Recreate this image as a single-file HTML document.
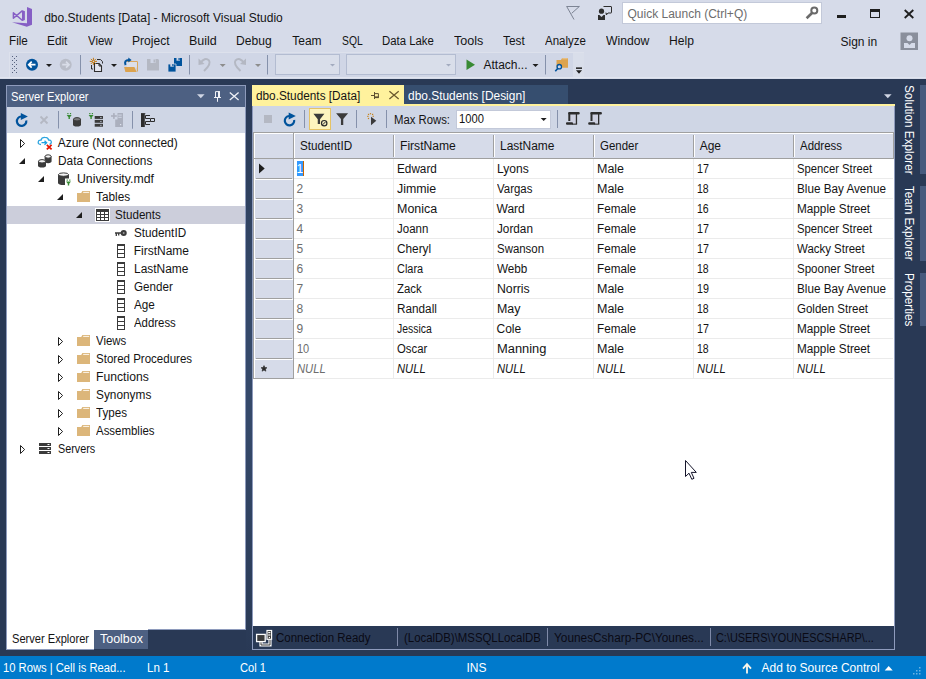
<!DOCTYPE html>
<html><head><meta charset="utf-8"><title>dbo.Students [Data] - Microsoft Visual Studio</title>
<style>
html,body{margin:0;padding:0;}
body{width:926px;height:679px;overflow:hidden;position:relative;background:#293955;font-family:"Liberation Sans", sans-serif;}
div,span,svg{position:absolute;box-sizing:border-box;}
span{white-space:pre;}
</style></head><body>
<div style="left:0px;top:0px;width:926px;height:79px;background:#d6dbe9;"></div>
<div style="left:9px;top:52px;width:575px;height:25px;background:#d0d6e6;border-left:1px solid #dde1ec;border-top:1px solid #dde1ec;"></div>
<div style="left:573px;top:53px;width:11px;height:24px;background:#d9deea;"></div>
<div style="left:0px;top:77px;width:926px;height:1px;background:#e1e5ef;"></div>
<div style="left:622px;top:2px;width:200px;height:22px;background:#ffffff;border:1px solid #c3c9d9;"></div>
<div style="left:6px;top:85px;width:240px;height:565px;background:#8e9bbc;"></div>
<div style="left:7px;top:86px;width:238px;height:21px;background:#4d6082;"></div>
<div style="left:7px;top:107px;width:238px;height:26px;background:#cfd6e5;"></div>
<div style="left:7px;top:133px;width:238px;height:497px;background:#ffffff;"></div>
<div style="left:7px;top:630px;width:87px;height:19px;background:#ffffff;"></div>
<div style="left:94px;top:630px;width:152px;height:20px;background:#293955;"></div>
<div style="left:94px;top:630px;width:54px;height:19px;background:#4d6082;"></div>
<div style="left:148px;top:629px;width:98px;height:1px;background:#8e9bbc;"></div>
<div style="left:7px;top:206px;width:238px;height:18px;background:#ccceDB;"></div>
<div style="left:246px;top:79px;width:6px;height:577px;background:linear-gradient(to bottom,#293955 0%,#35496a 40%,#35496a 60%,#293955 100%);"></div>
<div style="left:252px;top:85px;width:152px;height:21px;background:#fff29d;"></div>
<div style="left:404px;top:85px;width:164px;height:19px;background:#364e6f;"></div>
<div style="left:252px;top:104px;width:643px;height:2px;background:#fff29d;"></div>
<div style="left:252px;top:106px;width:643px;height:26px;background:#cfd6e5;border-left:1px solid #8e9bbc;border-right:1px solid #8e9bbc;"></div>
<div style="left:252px;top:132px;width:643px;height:494px;background:#ffffff;border-left:1px solid #8e9bbc;border-right:1px solid #8e9bbc;"></div>
<div style="left:252px;top:626px;width:643px;height:24px;background:#293955;border:1px solid #8e9bbc;border-top:none;"></div>
<div style="left:456px;top:110px;width:95px;height:19px;background:#ffffff;border:1px solid #c3c9d9;"></div>
<div style="left:397px;top:628px;width:1px;height:18px;background:#7f8aa8;"></div>
<div style="left:547px;top:628px;width:1px;height:18px;background:#7f8aa8;"></div>
<div style="left:710px;top:628px;width:1px;height:18px;background:#7f8aa8;"></div>
<div style="left:253px;top:132px;width:641px;height:1px;background:#a0a0a0;"></div>
<div style="left:253px;top:133px;width:641px;height:25px;background:#d6dbe9;"></div>
<div style="left:253px;top:133px;width:641px;height:1px;background:#ffffff;"></div>
<div style="left:253px;top:132px;width:1px;height:247px;background:#a0a0a0;"></div>
<div style="left:254px;top:133px;width:1px;height:245px;background:#ffffff;"></div>
<div style="left:255px;top:159px;width:38px;height:219px;background:#d6dbe9;"></div>
<div style="left:293px;top:133px;width:1px;height:246px;background:#a0a0a0;"></div>
<div style="left:294px;top:133px;width:1px;height:25px;background:#ffffff;"></div>
<div style="left:256px;top:178px;width:36px;height:1px;background:#a0a0a0;"></div>
<div style="left:255px;top:179px;width:38px;height:1px;background:#ffffff;"></div>
<div style="left:294px;top:178px;width:599px;height:1px;background:#ebebeb;"></div>
<div style="left:256px;top:198px;width:36px;height:1px;background:#a0a0a0;"></div>
<div style="left:255px;top:199px;width:38px;height:1px;background:#ffffff;"></div>
<div style="left:294px;top:198px;width:599px;height:1px;background:#ebebeb;"></div>
<div style="left:256px;top:218px;width:36px;height:1px;background:#a0a0a0;"></div>
<div style="left:255px;top:219px;width:38px;height:1px;background:#ffffff;"></div>
<div style="left:294px;top:218px;width:599px;height:1px;background:#ebebeb;"></div>
<div style="left:256px;top:238px;width:36px;height:1px;background:#a0a0a0;"></div>
<div style="left:255px;top:239px;width:38px;height:1px;background:#ffffff;"></div>
<div style="left:294px;top:238px;width:599px;height:1px;background:#ebebeb;"></div>
<div style="left:256px;top:258px;width:36px;height:1px;background:#a0a0a0;"></div>
<div style="left:255px;top:259px;width:38px;height:1px;background:#ffffff;"></div>
<div style="left:294px;top:258px;width:599px;height:1px;background:#ebebeb;"></div>
<div style="left:256px;top:278px;width:36px;height:1px;background:#a0a0a0;"></div>
<div style="left:255px;top:279px;width:38px;height:1px;background:#ffffff;"></div>
<div style="left:294px;top:278px;width:599px;height:1px;background:#ebebeb;"></div>
<div style="left:256px;top:298px;width:36px;height:1px;background:#a0a0a0;"></div>
<div style="left:255px;top:299px;width:38px;height:1px;background:#ffffff;"></div>
<div style="left:294px;top:298px;width:599px;height:1px;background:#ebebeb;"></div>
<div style="left:256px;top:318px;width:36px;height:1px;background:#a0a0a0;"></div>
<div style="left:255px;top:319px;width:38px;height:1px;background:#ffffff;"></div>
<div style="left:294px;top:318px;width:599px;height:1px;background:#ebebeb;"></div>
<div style="left:256px;top:338px;width:36px;height:1px;background:#a0a0a0;"></div>
<div style="left:255px;top:339px;width:38px;height:1px;background:#ffffff;"></div>
<div style="left:294px;top:338px;width:599px;height:1px;background:#ebebeb;"></div>
<div style="left:256px;top:358px;width:36px;height:1px;background:#a0a0a0;"></div>
<div style="left:255px;top:359px;width:38px;height:1px;background:#ffffff;"></div>
<div style="left:294px;top:358px;width:599px;height:1px;background:#ebebeb;"></div>
<div style="left:253px;top:378px;width:40px;height:1px;background:#a0a0a0;"></div>
<div style="left:294px;top:378px;width:599px;height:1px;background:#ebebeb;"></div>
<div style="left:393px;top:159px;width:1px;height:220px;background:#ebebeb;"></div>
<div style="left:393px;top:135px;width:1px;height:22px;background:#a0a0a0;"></div>
<div style="left:394px;top:135px;width:1px;height:22px;background:#ffffff;"></div>
<div style="left:493px;top:159px;width:1px;height:220px;background:#ebebeb;"></div>
<div style="left:493px;top:135px;width:1px;height:22px;background:#a0a0a0;"></div>
<div style="left:494px;top:135px;width:1px;height:22px;background:#ffffff;"></div>
<div style="left:593px;top:159px;width:1px;height:220px;background:#ebebeb;"></div>
<div style="left:593px;top:135px;width:1px;height:22px;background:#a0a0a0;"></div>
<div style="left:594px;top:135px;width:1px;height:22px;background:#ffffff;"></div>
<div style="left:693px;top:159px;width:1px;height:220px;background:#ebebeb;"></div>
<div style="left:693px;top:135px;width:1px;height:22px;background:#a0a0a0;"></div>
<div style="left:694px;top:135px;width:1px;height:22px;background:#ffffff;"></div>
<div style="left:793px;top:159px;width:1px;height:220px;background:#ebebeb;"></div>
<div style="left:793px;top:135px;width:1px;height:22px;background:#a0a0a0;"></div>
<div style="left:794px;top:135px;width:1px;height:22px;background:#ffffff;"></div>
<div style="left:893px;top:133px;width:1px;height:26px;background:#a0a0a0;"></div>
<div style="left:253px;top:158px;width:641px;height:1px;background:#a0a0a0;"></div>
<div style="left:297px;top:161px;width:6px;height:15px;background:#3399ff;"></div>
<div style="left:303px;top:161px;width:1px;height:15px;background:#c86400;"></div>
<div style="left:920px;top:85px;width:6px;height:89px;background:#465a7d;"></div>
<div style="left:920px;top:186px;width:6px;height:75px;background:#465a7d;"></div>
<div style="left:920px;top:273px;width:6px;height:53px;background:#465a7d;"></div>
<div style="left:0px;top:656px;width:926px;height:23px;background:#007acc;"></div>
<svg style="left:0;top:0" width="926" height="679" viewBox="0 0 926 679"><polygon points="27,7 32,9 32,24.7 26.8,26.8 12,22.3 27,23.3" fill="#865fc5"/><path d="M13.4 12.7 L13.4 18.3 L22.2 10.9 L24 11.7 L24 19.5 L22.2 20.3 Z" fill="none" stroke="#865fc5" stroke-width="1.5" stroke-linejoin="round"/><rect x="22" y="11" width="2.6" height="9" fill="#865fc5"/><path d="M566.5 6.5 H579.5 M566.7 6.5 L574 19.5 M579.3 6.5 L571.7 13.3" stroke="#7d8494" stroke-width="1" fill="none"/><circle cx="601.5" cy="11.2" r="2.6" fill="#2d2d2d"/><path d="M598 15 H599.5 L601.5 17 L603.5 15 H605 V20 H598 Z" fill="#2d2d2d"/><path d="M603.5 6.5 H611 Q611.5 6.5 611.5 7 V12.5 Q611.5 13 611 13 H608 L606.3 15 V13 H605.5" fill="none" stroke="#2d2d2d" stroke-width="1"/><circle cx="814.3" cy="10.6" r="3" fill="none" stroke="#6a6a6a" stroke-width="2"/><path d="M812 13 L806.6 18.2" stroke="#6a6a6a" stroke-width="2.6"/><rect x="837" y="15" width="9" height="3" fill="#1e1e1e"/><rect x="870.5" y="10.5" width="9" height="7" fill="none" stroke="#1e1e1e" stroke-width="1"/><rect x="870" y="9" width="10" height="3" fill="#1e1e1e"/><path d="M904.7 10 L913.3 18 M913.3 10 L904.7 18" stroke="#1e1e1e" stroke-width="1.8"/><rect x="900.5" y="32.5" width="17.5" height="17.5" fill="#8a8f9c"/><circle cx="909.5" cy="38.3" r="3" fill="#d6dbe9"/><path d="M904 43 H907.5 L909.5 45 L911.5 43 H915 V48 H904 Z" fill="#d6dbe9"/><rect x="12" y="56" width="1" height="1" fill="#55617e"/><rect x="16" y="56" width="1" height="1" fill="#55617e"/><rect x="14" y="58" width="1" height="1" fill="#55617e"/><rect x="12" y="60" width="1" height="1" fill="#55617e"/><rect x="16" y="60" width="1" height="1" fill="#55617e"/><rect x="14" y="62" width="1" height="1" fill="#55617e"/><rect x="12" y="64" width="1" height="1" fill="#55617e"/><rect x="16" y="64" width="1" height="1" fill="#55617e"/><rect x="14" y="66" width="1" height="1" fill="#55617e"/><rect x="12" y="68" width="1" height="1" fill="#55617e"/><rect x="16" y="68" width="1" height="1" fill="#55617e"/><rect x="14" y="70" width="1" height="1" fill="#55617e"/><rect x="12" y="72" width="1" height="1" fill="#55617e"/><rect x="16" y="72" width="1" height="1" fill="#55617e"/><circle cx="32" cy="64.7" r="6" fill="#00539c"/><path d="M35.5 64.7 H29 M31.7 61.7 L28.7 64.7 L31.7 67.7" stroke="#fff" stroke-width="1.7" fill="none"/><polygon points="46,64 52,64 49.0,67.0" fill="#1e1e1e"/><circle cx="65.7" cy="64.7" r="6" fill="#b9bdc8"/><path d="M62.2 64.7 H68.7 M66 61.7 L69 64.7 L66 67.7" stroke="#d9dde8" stroke-width="1.7" fill="none"/><rect x="80" y="55" width="1" height="19.5" fill="#8591ab"/><path d="M97 59.5 H100.5 L102.5 61.7 V63.5 M91.5 65 V69 H93" fill="none" stroke="#2d2d2d" stroke-width="1"/><path d="M94.5 63.5 H99 L101.5 66 V71.5 H94.5 Z" fill="#e4e6f0" stroke="#2d2d2d" stroke-width="1.1"/><path d="M99 63.5 V66 H101.5" fill="none" stroke="#2d2d2d" stroke-width="1"/><path d="M93.4 57.8 V65 M89.8 61.4 H97 M90.9 58.9 L95.9 63.9 M95.9 58.9 L90.9 63.9" stroke="#c27d1a" stroke-width="1"/><circle cx="93.4" cy="61.4" r="1.1" fill="#d0d6e6" stroke="#c27d1a" stroke-width="0.9"/><polygon points="111,64 117,64 114.0,67.0" fill="#1e1e1e"/><path d="M127 61.6 H137.4 V71.5" fill="none" stroke="#dca34e" stroke-width="1"/><rect x="127" y="62" width="10" height="5.5" fill="#dcdfe9"/><path d="M124.1 67 H134.4 L136.7 72 H125.4 Z" fill="#dca34e"/><path d="M125.6 65 Q123.6 60.2 129 60.1" fill="none" stroke="#00539c" stroke-width="2"/><polygon points="128.3,57.6 131.6,60.1 128.3,62.6" fill="#00539c"/><path d="M147 59 H158 L159 60 V70.5 H147 Z" fill="#b4b8c3"/><rect x="150.5" y="59" width="5" height="4" fill="#d0d6e6"/><rect x="153.5" y="59.5" width="1.5" height="3" fill="#b4b8c3"/><path d="M174 58 H182 V66 H174 Z" fill="#00539c"/><rect x="176.5" y="58" width="3.5" height="2.7" fill="#d0d6e6"/><rect x="178.5" y="58" width="1.2" height="2.2" fill="#00539c"/><path d="M168 64 H176 V72 H168 Z" fill="#00539c" stroke="#d0d6e6" stroke-width="0.8"/><rect x="170.3" y="64" width="3.5" height="2.7" fill="#d0d6e6"/><rect x="172.3" y="64" width="1.2" height="2.2" fill="#00539c"/><rect x="189" y="55" width="1" height="19.5" fill="#8591ab"/><path d="M200 63.5 Q205 56.5 209 60.5 Q211.5 64 204 71" fill="none" stroke="#b4b8c3" stroke-width="2"/><polygon points="198.5,58.5 198.5,65 204.5,64" fill="#b4b8c3"/><polygon points="219.7,64 225.7,64 222.7,67.0" fill="#8d8d8d"/><path d="M244.5 63.5 Q239.5 56.5 235.5 60.5 Q233 64 240.5 71" fill="none" stroke="#b4b8c3" stroke-width="2"/><polygon points="246,58.5 246,65 240,64" fill="#b4b8c3"/><polygon points="255,64 261,64 258.0,67.0" fill="#8d8d8d"/><rect x="267" y="55" width="1" height="19.5" fill="#8591ab"/><rect x="275.5" y="54.5" width="64" height="20" fill="#d9deea" stroke="#b3bcd1"/><rect x="346.5" y="54.5" width="109" height="20" fill="#d9deea" stroke="#b3bcd1"/><polygon points="330,64 335,64 332.5,66.5" fill="#a3abbf"/><polygon points="446,64 451,64 448.5,66.5" fill="#a3abbf"/><polygon points="466.5,59.5 475,64.7 466.5,70" fill="#388a34"/><polygon points="532.5,64 538.5,64 535.5,67.0" fill="#1e1e1e"/><rect x="545" y="55" width="1" height="19.5" fill="#8591ab"/><path d="M556.5 60 H561 L562 58.2 H568 V67.7 H556.5 Z" fill="#dca34e"/><path d="M562.3 58.8 H567.6" stroke="#ecc58a" stroke-width="1"/><circle cx="559.3" cy="66.7" r="2.2" fill="#d0d6e6" stroke="#00539c" stroke-width="1.3"/><path d="M557.7 68.5 L555.3 71.3" stroke="#00539c" stroke-width="1.6"/><rect x="576" y="67.4" width="6" height="1.5" fill="#1e1e1e"/><polygon points="576,70.3 582,70.3 579,73.7" fill="#1e1e1e"/><polygon points="197,94.3 204.6,94.3 200.8,98.2" fill="#d0d6e4"/><path d="M215.5 97 V91.6 H219.5 M214 97.5 H221 M217.5 98 V101.8" stroke="#f0f2f7" stroke-width="1" fill="none"/><rect x="218" y="91.1" width="2" height="6" fill="#f0f2f7"/><path d="M229.8 92.4 L238.6 100 M238.6 92.4 L229.8 100" stroke="#f0f2f7" stroke-width="1.3"/><path d="M21.3 116.5 A4.7 4.7 0 1 0 26.25 120.5" fill="none" stroke="#00539c" stroke-width="2.2"/><polygon points="20.8,112.9 27.900000000000002,116.5 20.8,120.10000000000001" fill="#00539c"/><path d="M40.5 116.5 L47.5 123.5 M47.5 116.5 L40.5 123.5" stroke="#b4b8c3" stroke-width="1.8"/><rect x="58" y="111" width="1" height="17.5" fill="#8591ab"/><path d="M66.7 115 H71.7 L69.9 117.3 V119 H68.5 V117.3 Z" fill="#388a34"/><rect x="67.3" y="113" width="1.2" height="1.2" fill="#388a34"/><rect x="69.9" y="113" width="1.2" height="1.2" fill="#388a34"/><path d="M73 119.1 V124.5 A4.0 2.1 0 0 0 81 124.5 V119.1 Z" fill="#3b3b3b"/><ellipse cx="77.0" cy="119.3" rx="3.5" ry="1.7000000000000002" fill="#7a7a7a" stroke="#3b3b3b" stroke-width="1"/><path d="M88.6 115 H93.6 L91.8 117.3 V119 H90.39999999999999 V117.3 Z" fill="#388a34"/><rect x="89.19999999999999" y="113" width="1.2" height="1.2" fill="#388a34"/><rect x="91.8" y="113" width="1.2" height="1.2" fill="#388a34"/><rect x="94.7" y="116.0" width="8.3" height="2.9" fill="#3b3b3b"/><rect x="100.3" y="117.0" width="1.2" height="1" fill="#cfd6e5"/><rect x="94.7" y="119.9" width="8.3" height="2.9" fill="#3b3b3b"/><rect x="100.3" y="120.9" width="1.2" height="1" fill="#cfd6e5"/><rect x="94.7" y="123.8" width="8.3" height="2.9" fill="#3b3b3b"/><rect x="100.3" y="124.8" width="1.2" height="1" fill="#cfd6e5"/><path d="M117.5 113.1 H123 V127 H115.2 V119.5 H117.5 Z" fill="#abb0be"/><rect x="111" y="115.2" width="5.8" height="1.6" fill="#abb0be"/><rect x="113.1" y="113.1" width="1.6" height="5.8" fill="#abb0be"/><rect x="118.3" y="114.6" width="3.4" height="1" fill="#cfd6e5"/><rect x="118.3" y="116.8" width="3.4" height="1" fill="#cfd6e5"/><rect x="120" y="124" width="1.2" height="1.2" fill="#dfe3ee"/><rect x="132" y="111" width="1" height="17.7" fill="#8591ab"/><rect x="141" y="113.1" width="3.8" height="13.9" fill="#2d2d2d"/><rect x="144.5" y="113.1" width="0.8" height="1" fill="#2d2d2d"/><path d="M150 115.5 H145.5 V118.5 H150 M150.5 118.5 H154.5 V121.5 H150.5 Z M150.5 121.5 H145.5 V124.5 H150" fill="none" stroke="#2d2d2d" stroke-width="1"/><path d="M20.5 139.5 V147.5 L24.6 143.5 Z" fill="#fff" stroke="#1e1e1e" stroke-width="1"/><path d="M41 144.5 Q38 144.5 38.2 142 Q38.4 140 41 140.2 Q41.5 137.2 45 137.3 Q48 137.3 48.7 140 Q51.5 140 51.3 142.5 Q51 144 49.5 144.3" fill="none" stroke="#2ea5e0" stroke-width="1.3"/><path d="M41.5 142.7 H46.5 M44.5 140.7 L46.7 142.7 L44.5 144.7" stroke="#1ba1e2" stroke-width="1.2" fill="none"/><path d="M46.8 144.8 L51.6 149.4 M51.6 144.8 L46.8 149.4" stroke="#e51400" stroke-width="1.7"/><polygon points="25,158 25,164 19,164" fill="#1e1e1e"/><path d="M44.6 156.29999999999998 V161.1 A3.5 2.1 0 0 0 51.6 161.1 V156.29999999999998 Z" fill="#3b3b3b"/><ellipse cx="48.1" cy="156.49999999999997" rx="3.0" ry="1.7000000000000002" fill="#f4f4f4" stroke="#3b3b3b" stroke-width="1"/><path d="M38 161.1 V165.4 A4.0 2.1 0 0 0 46 165.4 V161.1 Z" fill="#3b3b3b"/><ellipse cx="42.0" cy="161.29999999999998" rx="3.5" ry="1.7000000000000002" fill="#f4f4f4" stroke="#3b3b3b" stroke-width="1"/><polygon points="44,176 44,182 38,182" fill="#1e1e1e"/><path d="M58 174.4 V182.9 A5.5 2.1 0 0 0 69 182.9 V174.4 Z" fill="#3b3b3b"/><ellipse cx="63.5" cy="174.6" rx="5.0" ry="1.7000000000000002" fill="#f4f4f4" stroke="#3b3b3b" stroke-width="1"/><rect x="65" y="178.5" width="7" height="8" fill="#fff"/><path d="M66 181.5 H71 L69.2 183.8 V185.5 H67.8 V183.8 Z" fill="#388a34"/><rect x="66.6" y="179.5" width="1.2" height="1.2" fill="#388a34"/><rect x="69.2" y="179.5" width="1.2" height="1.2" fill="#388a34"/><polygon points="63,194 63,200 57,200" fill="#1e1e1e"/><path d="M77 193 H81.2 L82.4 191 H90 V202 H77 Z" fill="#dcb67a"/><path d="M83.2 192.4 H89.2" stroke="#fdf8ee" stroke-width="1"/><polygon points="82,212 82,218 76,218" fill="#1e1e1e"/><rect x="95.5" y="208.5" width="14" height="13" fill="#fff" stroke="#fff"/><rect x="96.5" y="209.5" width="12" height="11" fill="#fff" stroke="#3b3b3b" stroke-width="1"/><rect x="96" y="209" width="13" height="3" fill="#3b3b3b"/><path d="M96.5 214.5 H108.5 M96.5 217.5 H108.5 M100.5 211 V220.5 M104.5 211 V220.5" stroke="#3b3b3b" stroke-width="1"/><circle cx="123.7" cy="233" r="2" fill="#9a9a9a" stroke="#3b3b3b" stroke-width="2.1"/><path d="M115 233 H121.5 M116.3 233 V236 M118.7 233 V235.5" stroke="#3b3b3b" stroke-width="1.3"/><rect x="117.5" y="244.5" width="7" height="13" fill="#fff" stroke="#3b3b3b" stroke-width="1"/><rect x="117" y="244" width="8" height="2" fill="#3b3b3b"/><rect x="117" y="249" width="8" height="1" fill="#3b3b3b"/><rect x="117" y="253" width="8" height="1" fill="#3b3b3b"/><rect x="117.5" y="262.5" width="7" height="13" fill="#fff" stroke="#3b3b3b" stroke-width="1"/><rect x="117" y="262" width="8" height="2" fill="#3b3b3b"/><rect x="117" y="267" width="8" height="1" fill="#3b3b3b"/><rect x="117" y="271" width="8" height="1" fill="#3b3b3b"/><rect x="117.5" y="280.5" width="7" height="13" fill="#fff" stroke="#3b3b3b" stroke-width="1"/><rect x="117" y="280" width="8" height="2" fill="#3b3b3b"/><rect x="117" y="285" width="8" height="1" fill="#3b3b3b"/><rect x="117" y="289" width="8" height="1" fill="#3b3b3b"/><rect x="117.5" y="298.5" width="7" height="13" fill="#fff" stroke="#3b3b3b" stroke-width="1"/><rect x="117" y="298" width="8" height="2" fill="#3b3b3b"/><rect x="117" y="303" width="8" height="1" fill="#3b3b3b"/><rect x="117" y="307" width="8" height="1" fill="#3b3b3b"/><rect x="117.5" y="316.5" width="7" height="13" fill="#fff" stroke="#3b3b3b" stroke-width="1"/><rect x="117" y="316" width="8" height="2" fill="#3b3b3b"/><rect x="117" y="321" width="8" height="1" fill="#3b3b3b"/><rect x="117" y="325" width="8" height="1" fill="#3b3b3b"/><path d="M58.5 337.5 V345.5 L62.6 341.5 Z" fill="#fff" stroke="#1e1e1e" stroke-width="1"/><path d="M77 337 H81.2 L82.4 335 H90 V346 H77 Z" fill="#dcb67a"/><path d="M83.2 336.4 H89.2" stroke="#fdf8ee" stroke-width="1"/><path d="M58.5 355.5 V363.5 L62.6 359.5 Z" fill="#fff" stroke="#1e1e1e" stroke-width="1"/><path d="M77 355 H81.2 L82.4 353 H90 V364 H77 Z" fill="#dcb67a"/><path d="M83.2 354.4 H89.2" stroke="#fdf8ee" stroke-width="1"/><path d="M58.5 373.5 V381.5 L62.6 377.5 Z" fill="#fff" stroke="#1e1e1e" stroke-width="1"/><path d="M77 373 H81.2 L82.4 371 H90 V382 H77 Z" fill="#dcb67a"/><path d="M83.2 372.4 H89.2" stroke="#fdf8ee" stroke-width="1"/><path d="M58.5 391.5 V399.5 L62.6 395.5 Z" fill="#fff" stroke="#1e1e1e" stroke-width="1"/><path d="M77 391 H81.2 L82.4 389 H90 V400 H77 Z" fill="#dcb67a"/><path d="M83.2 390.4 H89.2" stroke="#fdf8ee" stroke-width="1"/><path d="M58.5 409.5 V417.5 L62.6 413.5 Z" fill="#fff" stroke="#1e1e1e" stroke-width="1"/><path d="M77 409 H81.2 L82.4 407 H90 V418 H77 Z" fill="#dcb67a"/><path d="M83.2 408.4 H89.2" stroke="#fdf8ee" stroke-width="1"/><path d="M58.5 427.5 V435.5 L62.6 431.5 Z" fill="#fff" stroke="#1e1e1e" stroke-width="1"/><path d="M77 427 H81.2 L82.4 425 H90 V436 H77 Z" fill="#dcb67a"/><path d="M83.2 426.4 H89.2" stroke="#fdf8ee" stroke-width="1"/><path d="M20.5 445.5 V453.5 L24.6 449.5 Z" fill="#fff" stroke="#1e1e1e" stroke-width="1"/><rect x="39" y="443" width="12" height="3" fill="#3b3b3b"/><rect x="47.5" y="444" width="2" height="1" fill="#fff"/><rect x="39" y="447" width="12" height="3" fill="#3b3b3b"/><rect x="47.5" y="448" width="2" height="1" fill="#fff"/><rect x="39" y="451" width="12" height="3" fill="#3b3b3b"/><rect x="47.5" y="452" width="2" height="1" fill="#fff"/><path d="M371 95.5 H374.5 M374.5 92 V99 M374.5 93.6 H378.4 V97.2" stroke="#5e5030" stroke-width="1" fill="none"/><rect x="374.5" y="96.4" width="4.4" height="1.7" fill="#5e5030"/><path d="M389.4 91.2 L398.7 99 M398.7 91.2 L389.4 99" stroke="#6b5a2e" stroke-width="1.25"/><polygon points="884,94.3 891.6,94.3 887.8,98.2" fill="#d0d6e4"/><rect x="264" y="115" width="8" height="8" fill="#b4b8c3"/><path d="M289.2 116.0 A4.7 4.7 0 1 0 294.15 120.0" fill="none" stroke="#00539c" stroke-width="2.2"/><polygon points="288.7,112.4 295.8,116.0 288.7,119.60000000000001" fill="#00539c"/><rect x="304" y="110" width="1" height="18" fill="#8591ab"/><rect x="309.5" y="108.5" width="21" height="21" fill="#fdf4bf" stroke="#e5c365"/><path d="M313.4 113.7 H324.4 L320.04999999999995 119.3 V124.0 H317.75 V119.3 Z" fill="#3b3b3b"/><circle cx="324.2" cy="123.2" r="2.7" fill="#f3ecc0" stroke="#2a2a2a" stroke-width="1.2"/><path d="M322.6 124.8 L325.8 121.6" stroke="#2a2a2a" stroke-width="1"/><path d="M336.1 113.3 H348.1 L343.25 118.89999999999999 V124.89999999999999 H340.95000000000005 V118.89999999999999 Z" fill="#3b3b3b"/><rect x="356" y="110" width="1" height="18" fill="#8591ab"/><rect x="367.9" y="117.9" width="1.2" height="1.2" fill="#c8821a"/><rect x="367.3" y="115.8" width="1.2" height="1.2" fill="#c8821a"/><rect x="367.9" y="113.8" width="1.2" height="1.2" fill="#c8821a"/><rect x="369.9" y="113.1" width="1.2" height="1.2" fill="#c8821a"/><rect x="372.0" y="113.8" width="1.2" height="1.2" fill="#c8821a"/><rect x="372.6" y="115.7" width="1.2" height="1.2" fill="#c8821a"/><polygon points="371,116.8 376.3,120.8 371,125.2" fill="#3b3b3b"/><rect x="386" y="110" width="1" height="18" fill="#8591ab"/><polygon points="540.7,118 546.7,118 543.7,121.0" fill="#1e1e1e"/><rect x="557" y="110" width="1" height="18" fill="#8591ab"/><rect x="570" y="114" width="6.5" height="9.5" fill="#cdd0e0"/><rect x="568.3" y="112" width="11.4" height="2.5" rx="1" fill="#2d2d2d"/><rect x="568.3" y="112.5" width="2" height="8.5" fill="#2d2d2d"/><rect x="575.8" y="114" width="1.3" height="10" fill="#2d2d2d"/><rect x="566" y="122.2" width="7" height="2.5" rx="1" fill="#2d2d2d"/><rect x="572" y="123.6" width="5.1" height="1.1" fill="#2d2d2d"/><rect x="592.2" y="114" width="6.5" height="9.5" fill="#cdd0e0"/><rect x="590.5" y="112" width="11.4" height="2.5" rx="1" fill="#2d2d2d"/><rect x="590.5" y="112.5" width="2" height="8.5" fill="#2d2d2d"/><rect x="598.0" y="114" width="1.3" height="10" fill="#2d2d2d"/><rect x="588.2" y="122.2" width="7" height="2.5" rx="1" fill="#2d2d2d"/><rect x="594.2" y="123.6" width="5.1" height="1.1" fill="#2d2d2d"/><polygon points="259,163.5 264.7,168.5 259,173.5" fill="#1e1e1e"/><polygon points="264,365.6 264.9,367.5 267,367.7 265.4,369.1 265.9,371.2 264,370.1 262.1,371.2 262.6,369.1 261,367.7 263.1,367.5" fill="#2a2a2a" stroke="#2a2a2a" stroke-width="0.6"/><path d="M261 642 V645 H270 V639.5" fill="none" stroke="#fdfdfd" stroke-width="3.2" stroke-linejoin="miter"/><path d="M261 642 V645 H270 V639.5" fill="none" stroke="#3b3b3b" stroke-width="1"/><rect x="256.6" y="634.4" width="8.6" height="7.2" fill="#3b3b3b" stroke="#fdfdfd" stroke-width="1.3"/><rect x="267" y="630.5" width="4.6" height="8.8" fill="#3b3b3b" stroke="#fdfdfd" stroke-width="1.2"/><rect x="268.2" y="632" width="2.2" height="1.2" fill="#fdfdfd"/><rect x="268.2" y="634.4" width="2.2" height="1.2" fill="#fdfdfd"/><rect x="268.8" y="636.9" width="1.2" height="1.2" fill="#fdfdfd"/><path d="M747 673.5 V664 M743 668.6 L747 664 L751 668.6" stroke="#fbf6ea" stroke-width="1.8" fill="none"/><polygon points="884.7,670.5 892.7,670.5 888.7,666" fill="#fff"/><rect x="919" y="667" width="1.5" height="1.5" fill="#6db3e3"/><rect x="916" y="670" width="1.5" height="1.5" fill="#6db3e3"/><rect x="919" y="670" width="1.5" height="1.5" fill="#6db3e3"/><rect x="913" y="673" width="1.5" height="1.5" fill="#6db3e3"/><rect x="916" y="673" width="1.5" height="1.5" fill="#6db3e3"/><rect x="919" y="673" width="1.5" height="1.5" fill="#6db3e3"/><path d="M685.5 460.5 V476.5 L689 473.2 L691.8 479.3 L694 478.3 L691.3 472.4 H696.3 Z" fill="#fff" stroke="#14142a" stroke-width="1"/></svg>
<span style="left:44.20px;top:9.94px;font-size:12px;line-height:16px;color:#141414;">dbo.Students [Data] - Microsoft Visual Studio</span>
<span style="left:9.03px;top:32.94px;font-size:12px;line-height:16px;color:#141414;transform-origin:0 0;transform:scaleX(0.9722);">File</span>
<span style="left:47.01px;top:32.94px;font-size:12px;line-height:16px;color:#141414;transform-origin:0 0;transform:scaleX(0.9873);">Edit</span>
<span style="left:88.00px;top:32.94px;font-size:12px;line-height:16px;color:#141414;transform-origin:0 0;transform:scaleX(0.9515);">View</span>
<span style="left:131.99px;top:32.94px;font-size:12px;line-height:16px;color:#141414;transform-origin:0 0;transform:scaleX(1.0069);">Project</span>
<span style="left:188.96px;top:32.94px;font-size:12px;line-height:16px;color:#141414;transform-origin:0 0;transform:scaleX(1.0400);">Build</span>
<span style="left:236.49px;top:32.94px;font-size:12px;line-height:16px;color:#141414;transform-origin:0 0;transform:scaleX(1.0074);">Debug</span>
<span style="left:292.25px;top:32.94px;font-size:12px;line-height:16px;color:#141414;">Team</span>
<span style="left:341.57px;top:32.94px;font-size:12px;line-height:16px;color:#141414;transform-origin:0 0;transform:scaleX(0.8602);">SQL</span>
<span style="left:382.05px;top:32.94px;font-size:12px;line-height:16px;color:#141414;transform-origin:0 0;transform:scaleX(0.9484);">Data Lake</span>
<span style="left:453.74px;top:32.94px;font-size:12px;line-height:16px;color:#141414;transform-origin:0 0;transform:scaleX(1.0459);">Tools</span>
<span style="left:502.75px;top:32.94px;font-size:12px;line-height:16px;color:#141414;transform-origin:0 0;transform:scaleX(0.9885);">Test</span>
<span style="left:545.00px;top:32.94px;font-size:12px;line-height:16px;color:#141414;transform-origin:0 0;transform:scaleX(0.9586);">Analyze</span>
<span style="left:606.00px;top:32.94px;font-size:12px;line-height:16px;color:#141414;transform-origin:0 0;transform:scaleX(1.0175);">Window</span>
<span style="left:668.99px;top:32.94px;font-size:12px;line-height:16px;color:#141414;transform-origin:0 0;transform:scaleX(1.0108);">Help</span>
<span style="left:840.50px;top:33.94px;font-size:12px;line-height:16px;color:#141414;">Sign in</span>
<span style="left:627.50px;top:5.94px;font-size:12px;line-height:16px;color:#6d6d6d;">Quick Launch (Ctrl+Q)</span>
<span style="left:483.50px;top:56.94px;font-size:12px;line-height:16px;color:#141414;">Attach...</span>
<span style="left:10.53px;top:88.94px;font-size:12px;line-height:16px;color:#ffffff;transform-origin:0 0;transform:scaleX(0.9305);">Server Explorer</span>
<span style="left:11.54px;top:630.94px;font-size:12px;line-height:16px;color:#141414;transform-origin:0 0;transform:scaleX(0.9245);">Server Explorer</span>
<span style="left:100.24px;top:630.94px;font-size:12px;line-height:16px;color:#ffffff;transform-origin:0 0;transform:scaleX(1.0366);">Toolbox</span>
<span style="left:57.70px;top:134.94px;font-size:12px;line-height:16px;color:#141414;">Azure (Not connected)</span>
<span style="left:57.70px;top:152.94px;font-size:12px;line-height:16px;color:#141414;transform-origin:0 0;transform:scaleX(0.9894);">Data Connections</span>
<span style="left:76.70px;top:170.94px;font-size:12px;line-height:16px;color:#141414;transform-origin:0 0;transform:scaleX(1.0236);">University.mdf</span>
<span style="left:95.70px;top:188.94px;font-size:12px;line-height:16px;color:#141414;transform-origin:0 0;transform:scaleX(0.9853);">Tables</span>
<span style="left:114.70px;top:206.94px;font-size:12px;line-height:16px;color:#141414;transform-origin:0 0;transform:scaleX(0.9677);">Students</span>
<span style="left:133.70px;top:224.94px;font-size:12px;line-height:16px;color:#141414;transform-origin:0 0;transform:scaleX(0.9761);">StudentID</span>
<span style="left:133.70px;top:242.94px;font-size:12px;line-height:16px;color:#141414;">FirstName</span>
<span style="left:133.70px;top:260.94px;font-size:12px;line-height:16px;color:#141414;transform-origin:0 0;transform:scaleX(0.9953);">LastName</span>
<span style="left:133.70px;top:278.94px;font-size:12px;line-height:16px;color:#141414;transform-origin:0 0;transform:scaleX(0.9682);">Gender</span>
<span style="left:133.70px;top:296.94px;font-size:12px;line-height:16px;color:#141414;transform-origin:0 0;transform:scaleX(0.9762);">Age</span>
<span style="left:133.70px;top:314.94px;font-size:12px;line-height:16px;color:#141414;transform-origin:0 0;transform:scaleX(0.9494);">Address</span>
<span style="left:95.70px;top:332.94px;font-size:12px;line-height:16px;color:#141414;transform-origin:0 0;transform:scaleX(0.9524);">Views</span>
<span style="left:95.70px;top:350.94px;font-size:12px;line-height:16px;color:#141414;transform-origin:0 0;transform:scaleX(0.9602);">Stored Procedures</span>
<span style="left:95.70px;top:368.94px;font-size:12px;line-height:16px;color:#141414;transform-origin:0 0;transform:scaleX(1.0139);">Functions</span>
<span style="left:95.70px;top:386.94px;font-size:12px;line-height:16px;color:#141414;transform-origin:0 0;transform:scaleX(0.9873);">Synonyms</span>
<span style="left:95.70px;top:404.94px;font-size:12px;line-height:16px;color:#141414;transform-origin:0 0;transform:scaleX(0.9696);">Types</span>
<span style="left:95.70px;top:422.94px;font-size:12px;line-height:16px;color:#141414;transform-origin:0 0;transform:scaleX(0.9541);">Assemblies</span>
<span style="left:57.70px;top:440.94px;font-size:12px;line-height:16px;color:#141414;transform-origin:0 0;transform:scaleX(0.9012);">Servers</span>
<span style="left:256.01px;top:87.94px;font-size:12px;line-height:16px;color:#141414;transform-origin:0 0;transform:scaleX(0.9833);">dbo.Students [Data]</span>
<span style="left:408.00px;top:87.94px;font-size:12px;line-height:16px;color:#ffffff;transform-origin:0 0;transform:scaleX(0.9936);">dbo.Students [Design]</span>
<span style="left:393.56px;top:111.94px;font-size:12px;line-height:16px;color:#141414;transform-origin:0 0;transform:scaleX(0.9432);">Max Rows:</span>
<span style="left:458.57px;top:110.94px;font-size:12px;line-height:16px;color:#141414;transform-origin:0 0;transform:scaleX(0.9307);">1000</span>
<span style="left:276.02px;top:629.94px;font-size:12px;line-height:16px;color:#0a0a14;transform-origin:0 0;transform:scaleX(0.9567);">Connection Ready</span>
<span style="left:403.79px;top:629.94px;font-size:12px;line-height:16px;color:#0a0a14;transform-origin:0 0;transform:scaleX(0.9492);">(LocalDB)\MSSQLLocalDB</span>
<span style="left:553.75px;top:629.94px;font-size:12px;line-height:16px;color:#0a0a14;transform-origin:0 0;transform:scaleX(0.9867);">YounesCsharp-PC\Younes...</span>
<span style="left:716.05px;top:629.94px;font-size:12px;line-height:16px;color:#0a0a14;transform-origin:0 0;transform:scaleX(0.9072);">C:\USERS\YOUNESCSHARP\...</span>
<span style="left:299.70px;top:137.94px;font-size:12px;line-height:16px;color:#141414;transform-origin:0 0;transform:scaleX(0.9761);">StudentID</span>
<span style="left:399.70px;top:137.94px;font-size:12px;line-height:16px;color:#141414;transform-origin:0 0;transform:scaleX(1.0093);">FirstName</span>
<span style="left:499.70px;top:137.94px;font-size:12px;line-height:16px;color:#141414;transform-origin:0 0;transform:scaleX(0.9953);">LastName</span>
<span style="left:599.70px;top:137.94px;font-size:12px;line-height:16px;color:#141414;transform-origin:0 0;transform:scaleX(0.9554);">Gender</span>
<span style="left:699.70px;top:137.94px;font-size:12px;line-height:16px;color:#141414;">Age</span>
<span style="left:799.70px;top:137.94px;font-size:12px;line-height:16px;color:#141414;transform-origin:0 0;transform:scaleX(0.9540);">Address</span>
<span style="left:296.50px;top:160.94px;font-size:12px;line-height:16px;color:#ffffff;">1</span>
<span style="left:396.50px;top:160.94px;font-size:12px;line-height:16px;color:#141414;transform-origin:0 0;transform:scaleX(0.9795);">Edward</span>
<span style="left:496.50px;top:160.94px;font-size:12px;line-height:16px;color:#141414;transform-origin:0 0;transform:scaleX(1.0050);">Lyons</span>
<span style="left:596.50px;top:160.94px;font-size:12px;line-height:16px;color:#141414;transform-origin:0 0;transform:scaleX(1.0408);">Male</span>
<span style="left:696.50px;top:160.94px;font-size:12px;line-height:16px;color:#141414;transform-origin:0 0;transform:scaleX(0.8936);">17</span>
<span style="left:796.50px;top:160.94px;font-size:12px;line-height:16px;color:#141414;transform-origin:0 0;transform:scaleX(0.9371);">Spencer Street</span>
<span style="left:296.50px;top:180.94px;font-size:12px;line-height:16px;color:#6d6d6d;">2</span>
<span style="left:396.50px;top:180.94px;font-size:12px;line-height:16px;color:#141414;transform-origin:0 0;transform:scaleX(1.0309);">Jimmie</span>
<span style="left:496.50px;top:180.94px;font-size:12px;line-height:16px;color:#141414;transform-origin:0 0;transform:scaleX(0.9524);">Vargas</span>
<span style="left:596.50px;top:180.94px;font-size:12px;line-height:16px;color:#141414;transform-origin:0 0;transform:scaleX(1.0408);">Male</span>
<span style="left:696.50px;top:180.94px;font-size:12px;line-height:16px;color:#141414;transform-origin:0 0;transform:scaleX(0.8750);">18</span>
<span style="left:796.50px;top:180.94px;font-size:12px;line-height:16px;color:#141414;transform-origin:0 0;transform:scaleX(0.9749);">Blue Bay Avenue</span>
<span style="left:296.50px;top:200.94px;font-size:12px;line-height:16px;color:#6d6d6d;">3</span>
<span style="left:396.50px;top:200.94px;font-size:12px;line-height:16px;color:#141414;transform-origin:0 0;transform:scaleX(1.0384);">Monica</span>
<span style="left:496.50px;top:200.94px;font-size:12px;line-height:16px;color:#141414;">Ward</span>
<span style="left:596.50px;top:200.94px;font-size:12px;line-height:16px;color:#141414;transform-origin:0 0;transform:scaleX(0.9740);">Female</span>
<span style="left:696.50px;top:200.94px;font-size:12px;line-height:16px;color:#141414;transform-origin:0 0;transform:scaleX(0.8750);">16</span>
<span style="left:796.50px;top:200.94px;font-size:12px;line-height:16px;color:#141414;transform-origin:0 0;transform:scaleX(0.9790);">Mapple Street</span>
<span style="left:296.50px;top:220.94px;font-size:12px;line-height:16px;color:#6d6d6d;">4</span>
<span style="left:396.50px;top:220.94px;font-size:12px;line-height:16px;color:#141414;transform-origin:0 0;transform:scaleX(0.9575);">Joann</span>
<span style="left:496.50px;top:220.94px;font-size:12px;line-height:16px;color:#141414;transform-origin:0 0;transform:scaleX(0.9790);">Jordan</span>
<span style="left:596.50px;top:220.94px;font-size:12px;line-height:16px;color:#141414;transform-origin:0 0;transform:scaleX(0.9740);">Female</span>
<span style="left:696.50px;top:220.94px;font-size:12px;line-height:16px;color:#141414;transform-origin:0 0;transform:scaleX(0.8936);">17</span>
<span style="left:796.50px;top:220.94px;font-size:12px;line-height:16px;color:#141414;transform-origin:0 0;transform:scaleX(0.9371);">Spencer Street</span>
<span style="left:296.50px;top:240.94px;font-size:12px;line-height:16px;color:#6d6d6d;">5</span>
<span style="left:396.50px;top:240.94px;font-size:12px;line-height:16px;color:#141414;transform-origin:0 0;transform:scaleX(0.9851);">Cheryl</span>
<span style="left:496.50px;top:240.94px;font-size:12px;line-height:16px;color:#141414;transform-origin:0 0;transform:scaleX(0.9534);">Swanson</span>
<span style="left:596.50px;top:240.94px;font-size:12px;line-height:16px;color:#141414;transform-origin:0 0;transform:scaleX(0.9740);">Female</span>
<span style="left:696.50px;top:240.94px;font-size:12px;line-height:16px;color:#141414;transform-origin:0 0;transform:scaleX(0.8936);">17</span>
<span style="left:796.50px;top:240.94px;font-size:12px;line-height:16px;color:#141414;transform-origin:0 0;transform:scaleX(0.9541);">Wacky Street</span>
<span style="left:296.50px;top:260.94px;font-size:12px;line-height:16px;color:#6d6d6d;">6</span>
<span style="left:396.50px;top:260.94px;font-size:12px;line-height:16px;color:#141414;transform-origin:0 0;transform:scaleX(0.9097);">Clara</span>
<span style="left:496.50px;top:260.94px;font-size:12px;line-height:16px;color:#141414;transform-origin:0 0;transform:scaleX(0.9756);">Webb</span>
<span style="left:596.50px;top:260.94px;font-size:12px;line-height:16px;color:#141414;transform-origin:0 0;transform:scaleX(0.9740);">Female</span>
<span style="left:696.50px;top:260.94px;font-size:12px;line-height:16px;color:#141414;transform-origin:0 0;transform:scaleX(0.8750);">18</span>
<span style="left:796.50px;top:260.94px;font-size:12px;line-height:16px;color:#141414;transform-origin:0 0;transform:scaleX(0.9595);">Spooner Street</span>
<span style="left:296.50px;top:280.94px;font-size:12px;line-height:16px;color:#6d6d6d;">7</span>
<span style="left:396.50px;top:280.94px;font-size:12px;line-height:16px;color:#141414;transform-origin:0 0;transform:scaleX(0.9515);">Zack</span>
<span style="left:496.50px;top:280.94px;font-size:12px;line-height:16px;color:#141414;transform-origin:0 0;transform:scaleX(1.0230);">Norris</span>
<span style="left:596.50px;top:280.94px;font-size:12px;line-height:16px;color:#141414;transform-origin:0 0;transform:scaleX(1.0408);">Male</span>
<span style="left:696.50px;top:280.94px;font-size:12px;line-height:16px;color:#141414;transform-origin:0 0;transform:scaleX(0.8936);">19</span>
<span style="left:796.50px;top:280.94px;font-size:12px;line-height:16px;color:#141414;transform-origin:0 0;transform:scaleX(0.9749);">Blue Bay Avenue</span>
<span style="left:296.50px;top:300.94px;font-size:12px;line-height:16px;color:#6d6d6d;">8</span>
<span style="left:396.50px;top:300.94px;font-size:12px;line-height:16px;color:#141414;transform-origin:0 0;transform:scaleX(0.9795);">Randall</span>
<span style="left:496.50px;top:300.94px;font-size:12px;line-height:16px;color:#141414;transform-origin:0 0;transform:scaleX(1.0345);">May</span>
<span style="left:596.50px;top:300.94px;font-size:12px;line-height:16px;color:#141414;transform-origin:0 0;transform:scaleX(1.0408);">Male</span>
<span style="left:696.50px;top:300.94px;font-size:12px;line-height:16px;color:#141414;transform-origin:0 0;transform:scaleX(0.8750);">18</span>
<span style="left:796.50px;top:300.94px;font-size:12px;line-height:16px;color:#141414;transform-origin:0 0;transform:scaleX(0.9592);">Golden Street</span>
<span style="left:296.50px;top:320.94px;font-size:12px;line-height:16px;color:#6d6d6d;">9</span>
<span style="left:396.50px;top:320.94px;font-size:12px;line-height:16px;color:#141414;transform-origin:0 0;transform:scaleX(0.8679);">Jessica</span>
<span style="left:496.50px;top:320.94px;font-size:12px;line-height:16px;color:#141414;">Cole</span>
<span style="left:596.50px;top:320.94px;font-size:12px;line-height:16px;color:#141414;transform-origin:0 0;transform:scaleX(0.9740);">Female</span>
<span style="left:696.50px;top:320.94px;font-size:12px;line-height:16px;color:#141414;transform-origin:0 0;transform:scaleX(0.8936);">17</span>
<span style="left:796.50px;top:320.94px;font-size:12px;line-height:16px;color:#141414;transform-origin:0 0;transform:scaleX(0.9790);">Mapple Street</span>
<span style="left:296.50px;top:340.94px;font-size:12px;line-height:16px;color:#6d6d6d;transform-origin:0 0;transform:scaleX(0.9167);">10</span>
<span style="left:396.50px;top:340.94px;font-size:12px;line-height:16px;color:#141414;transform-origin:0 0;transform:scaleX(0.9440);">Oscar</span>
<span style="left:496.50px;top:340.94px;font-size:12px;line-height:16px;color:#141414;transform-origin:0 0;transform:scaleX(1.0734);">Manning</span>
<span style="left:596.50px;top:340.94px;font-size:12px;line-height:16px;color:#141414;transform-origin:0 0;transform:scaleX(1.0408);">Male</span>
<span style="left:696.50px;top:340.94px;font-size:12px;line-height:16px;color:#141414;transform-origin:0 0;transform:scaleX(0.8750);">18</span>
<span style="left:796.50px;top:340.94px;font-size:12px;line-height:16px;color:#141414;transform-origin:0 0;transform:scaleX(0.9790);">Mapple Street</span>
<span style="left:296.50px;top:360.94px;font-size:12px;line-height:16px;color:#6d6d6d;transform-origin:0 0;transform:scaleX(0.9322);font-style:italic;">NULL</span>
<span style="left:396.50px;top:360.94px;font-size:12px;line-height:16px;color:#141414;transform-origin:0 0;transform:scaleX(0.9322);font-style:italic;">NULL</span>
<span style="left:496.50px;top:360.94px;font-size:12px;line-height:16px;color:#141414;transform-origin:0 0;transform:scaleX(0.9322);font-style:italic;">NULL</span>
<span style="left:596.50px;top:360.94px;font-size:12px;line-height:16px;color:#141414;transform-origin:0 0;transform:scaleX(0.9322);font-style:italic;">NULL</span>
<span style="left:696.50px;top:360.94px;font-size:12px;line-height:16px;color:#141414;transform-origin:0 0;transform:scaleX(0.9322);font-style:italic;">NULL</span>
<span style="left:796.50px;top:360.94px;font-size:12px;line-height:16px;color:#141414;transform-origin:0 0;transform:scaleX(0.9322);font-style:italic;">NULL</span>
<span style="left:917.06px;top:85.01px;font-size:12px;line-height:16px;color:#ffffff;transform-origin:0 0;transform:rotate(90deg) scaleX(0.9807);">Solution Explorer</span>
<span style="left:917.06px;top:186.26px;font-size:12px;line-height:16px;color:#ffffff;transform-origin:0 0;transform:rotate(90deg) scaleX(0.9649);">Team Explorer</span>
<span style="left:917.06px;top:273.02px;font-size:12px;line-height:16px;color:#ffffff;transform-origin:0 0;transform:rotate(90deg) scaleX(0.9765);">Properties</span>
<span style="left:2.57px;top:659.94px;font-size:12px;line-height:16px;color:#ffffff;transform-origin:0 0;transform:scaleX(0.9341);">10 Rows | Cell is Read...</span>
<span style="left:147.03px;top:659.94px;font-size:12px;line-height:16px;color:#ffffff;transform-origin:0 0;transform:scaleX(0.9655);">Ln 1</span>
<span style="left:240.04px;top:659.94px;font-size:12px;line-height:16px;color:#ffffff;transform-origin:0 0;transform:scaleX(0.9259);">Col 1</span>
<span style="left:466.50px;top:659.94px;font-size:12px;line-height:16px;color:#ffffff;">INS</span>
<span style="left:761.50px;top:659.94px;font-size:12px;line-height:16px;color:#ffffff;">Add to Source Control</span>
</body></html>
